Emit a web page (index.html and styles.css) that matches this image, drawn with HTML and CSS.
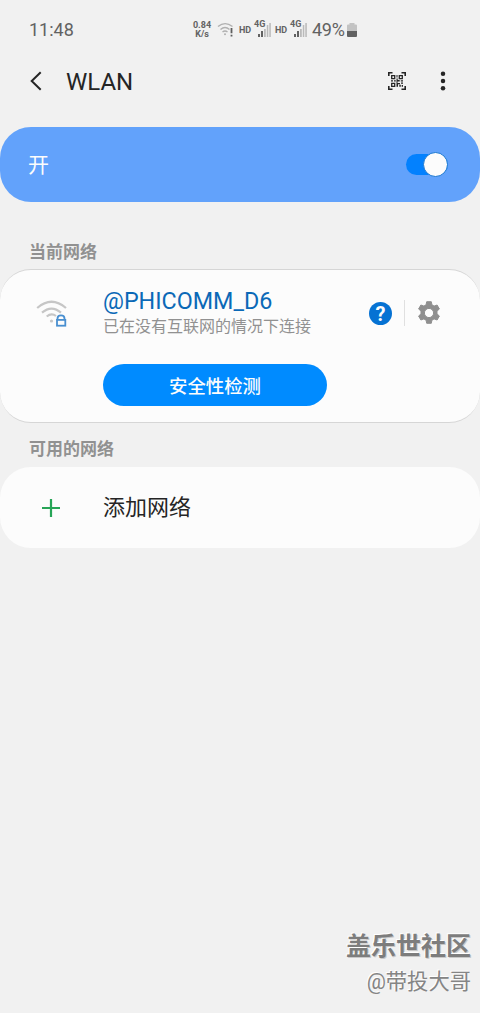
FILE: index.html
```html
<!DOCTYPE html>
<html lang="zh-CN">
<head>
<meta charset="utf-8">
<title>WLAN</title>
<link rel="stylesheet" href="styles.css">
</head>
<body>
<div class="screen">
  <div class="status">
    <span class="clock">11:48</span>
    <div class="status-icons">
      <span class="rate"><span>0.84</span><span>K/s</span></span>
      <svg class="wifi-small" width="17" height="16" viewBox="0 0 17 16" fill="none" stroke="#b0b0b0" stroke-width="1.4">
        <path d="M1 4.5Q8 -1.3 15.500 4.500M3.500 7.500Q8 3.600 12.500 7.500M5.500 10Q8 8 10.500 10"/>
        <circle cx="8" cy="12.300" r="1" fill="#b0b0b0" stroke="none"/>
        <path d="M14.500 6V11.200M14.500 12.700V14.500" stroke="#5f5f5f" stroke-width="1.800"/>
      </svg>
      <span class="hd">HD</span>
      <span class="signal"><svg width="17" height="16" viewBox="0 0 17 16"><path d="M4 12h2v3H4zM7 9h2v6H7z" fill="#626262"/><path d="M10 6h1.800v9H10zM12.800 3h1.500v12h-1.500zM15.300 1h1.500v14h-1.500z" fill="#bababa"/></svg><span class="net">4G</span></span>
      <span class="hd hd-second">HD</span>
      <span class="signal"><svg width="17" height="16" viewBox="0 0 17 16"><path d="M4 12h2v3H4zM7 9h2v6H7z" fill="#626262"/><path d="M10 6h1.800v9H10zM12.800 3h1.500v12h-1.500zM15.300 1h1.500v14h-1.500z" fill="#bababa"/></svg><span class="net">4G</span></span>
      <span class="percent">49%</span>
      <svg class="battery" width="10" height="14" viewBox="0 0 10 14"><path d="M2.500 0h5v1.500H9q1 0 1 1V8H0V2.500q0-1 1-1h1.500z" fill="#c3c3c3"/><path d="M0 8h10v5q0 1-1 1H1q-1 0-1-1z" fill="#626262"/></svg>
    </div>
  </div>
  <header class="toolbar">
    <svg class="back" width="12" height="20" viewBox="0 0 12 20" fill="none" stroke="#252525" stroke-width="2"><path d="M10.700 1.200L1.700 10L10.700 18.800"/></svg>
    <h1 class="title">WLAN</h1>
    <svg class="scan" width="18" height="18" viewBox="0 0 18 18" fill="none" stroke="#252525" stroke-width="1.600">
      <path d="M.8 4V.8H4.500M13.500 .8H17.200V4M.8 14V17.200H4.500M13.500 17.200H17.200V14"/>
      <path d="M3.700 3.700h3v3h-3zM11.300 3.700h3v3h-3zM3.700 11.300h3v3h-3z" stroke-width="1.300"/>
      <path d="M8.500 3h1v2.500h-1zM8.500 6.500h1.200V8h2V9.500H9.500V11H12v1.200h-2v2.500H8.500zM3 8.300h2v1.200H3zM6 8.300h1.800v1.200H6zM12.800 8.300H15v1.200h-2.200zM13 10.500h2v1.300h-2zM11.300 12.700h1.500v2h-1.500zM13.700 13H15v1.700h-1.300z" fill="#252525" stroke="none"/>
    </svg>
    <svg class="more" width="6" height="20" viewBox="0 0 6 20" fill="#252525"><circle cx="3" cy="2.700" r="2.250"/><circle cx="3" cy="10" r="2.250"/><circle cx="3" cy="17.200" r="2.250"/></svg>
  </header>
  <section class="master">
    <span class="master-label">开</span>
    <span class="switch"><span class="knob"></span></span>
  </section>
  <h2 class="heading heading-current">当前网络</h2>
  <section class="card current">
    <div class="network">
      <svg class="wifi" width="32" height="28" viewBox="0 0 32 28" fill="none" stroke="#c6c6c6" stroke-width="2.200">
        <path d="M1.200 8Q15.500-4.500 30 8M6 12.700Q15.500 4.500 25 12.700M10.700 16.500Q15.500 12.500 20 16"/>
        <circle cx="15.500" cy="21" r="1.600" fill="#c6c6c6" stroke="none"/>
        <path d="M21.500 20V18.400Q21.500 15.300 25 15.300Q28.500 15.300 28.500 18.400V20" stroke="#498fd0" stroke-width="1.800"/>
        <rect x="21" y="19.900" width="8.300" height="5.800" stroke="#498fd0" stroke-width="1.800"/>
      </svg>
      <div class="network-text">
        <span class="ssid">@PHICOMM_D6</span>
        <span class="summary">已在没有互联网的情况下连接</span>
      </div>
      <span class="help">?</span>
      <span class="divider"></span>
      <svg class="gear" width="24" height="24" viewBox="0 0 24 24"><path fill="#8f8f8f" stroke="#8f8f8f" stroke-width="1" stroke-linejoin="round" fill-rule="evenodd" d="M9.700 .7h4.600l.6 3.100 2.200 1.300 3-1.100 2.300 4-2.400 2.100v2.800l2.400 2.100-2.300 4-3-1.100-2.200 1.300-.6 3.100H9.700l-.6-3.100-2.200-1.300-3 1.100-2.300-4L4 12.900v-2.800L1.600 8l2.300-4 3 1.100 2.200-1.300zM12 7.400a4.600 4.600 0 1 0 0 9.200 4.600 4.600 0 1 0 0-9.200z"/></svg>
    </div>
    <button class="check">安全性检测</button>
  </section>
  <h2 class="heading heading-available">可用的网络</h2>
  <section class="card add">
    <svg class="plus" width="20" height="20" viewBox="0 0 20 20"><path d="M10 1v18M1 10h18" stroke="#27a557" stroke-width="2.200"/></svg>
    <span class="add-label">添加网络</span>
  </section>
  <footer class="credit">
    <span class="community">盖乐世社区</span>
    <span class="author">@带投大哥</span>
  </footer>
</div>
</body>
</html>
```
FILE: styles.css
```css
* { box-sizing: border-box; }
body {
  margin: 0;
  background: #f1f1f1;
  color: #252525;
  font-family: Roboto, "Noto Sans CJK SC", sans-serif;
}
svg { display: block; flex: none; }
.screen { display: flex; flex-direction: column; height: 1013px; overflow: hidden; }
.status { display: flex; align-items: center; height: 60px; padding-left: 29px; color: #626262; }
.clock { width: 163px; font-size: 18px; line-height: 20px; }
.status-icons { display: flex; align-items: center; }
.rate { display: flex; flex-direction: column; align-items: center; width: 20px; font-size: 9px; line-height: 9px; font-weight: 700; }
.wifi-small { margin-left: 5px; }
.hd { width: 13px; margin-left: 5px; margin-top: -1px; font-size: 9px; line-height: 12px; font-weight: 700; }
.hd-second { margin-left: 4px; }
.signal { position: relative; width: 17px; margin-left: 2px; }
.net { position: absolute; left: 0; top: -2px; padding-right: 1px; background: #f1f1f1; font-size: 9px; line-height: 9px; font-weight: 700; }
.percent { width: 33px; margin-left: 5px; font-size: 18px; line-height: 20px; letter-spacing: -.3px; }
.battery { margin-left: 2px; }
.toolbar { display: flex; align-items: center; height: 42px; padding-left: 30px; }
.title { width: 322px; margin: 2px 0 0 24px; font-size: 24px; line-height: 28px; font-weight: 400; }
.scan { margin-top: -1px; }
.more { margin-left: 34px; }
.master { display: flex; justify-content: space-between; align-items: center; height: 75px; margin-top: 25px; padding: 0 32px 0 28px; border-radius: 31px; background: #62a2fb; color: #fcfcfc; }
.master-label { font-size: 21px; line-height: 30px; margin-top: 1px; }
.switch { display: flex; justify-content: flex-end; align-items: center; width: 42px; height: 21px; border-radius: 11px; background: #0381fe; }
.knob { flex: none; width: 25px; height: 25px; border: 1px solid #1b78d2; border-radius: 50%; background: #fcfcfc; }
.heading { margin: 0; padding-left: 29px; color: #919191; font-size: 17px; line-height: 24px; font-weight: 700; }
.heading-current { margin-top: 38px; }
.heading-available { margin-top: 14px; }
.card { border-radius: 31px; background: #fcfcfc; }
.current { height: 154px; margin-top: 5px; padding-top: 17px; border-top: 1px solid #d6d6d6; border-bottom: 1px solid #d6d6d6; }
.network { display: flex; align-items: center; height: 52px; padding-left: 36px; }
.wifi { margin-top: 1px; }
.network-text { display: flex; flex-direction: column; width: 266px; margin-left: 35px; }
.ssid { color: #0b69b7; font-size: 23.3px; line-height: 28px; }
.summary { color: #919191; font-size: 16px; line-height: 24px; }
.help { width: 23px; height: 23px; border-radius: 50%; background: #0672d3; color: #fcfcfc; text-align: center; font-size: 20px; line-height: 24px; font-weight: 700; }
.divider { width: 1px; height: 26px; margin: 0 12px; background: #e0e0e0; }
.check { display: block; width: 224px; height: 42px; margin: 25px 0 0 103px; padding: 0; border: 0; border-radius: 21px; background: #008bff; color: #fcfcfc; font: 500 18.4px/42px "Noto Sans CJK SC", sans-serif; }
.add { display: flex; align-items: center; height: 81px; margin-top: 6px; padding-left: 41px; }
.add-label { margin-left: 42px; font-size: 22px; line-height: 32px; }
.credit { display: flex; flex-direction: column; align-items: flex-end; margin-top: auto; padding: 0 9px 14px 0; }
.community { color: #7d7d7d; font-size: 25px; line-height: 36px; font-weight: 700; text-shadow: -1px -1px #fff, 1px 1px #c8c8c8; }
.author { color: #858585; font-size: 21.300px; line-height: 34px; text-shadow: -1px -1px #fff; }
```
